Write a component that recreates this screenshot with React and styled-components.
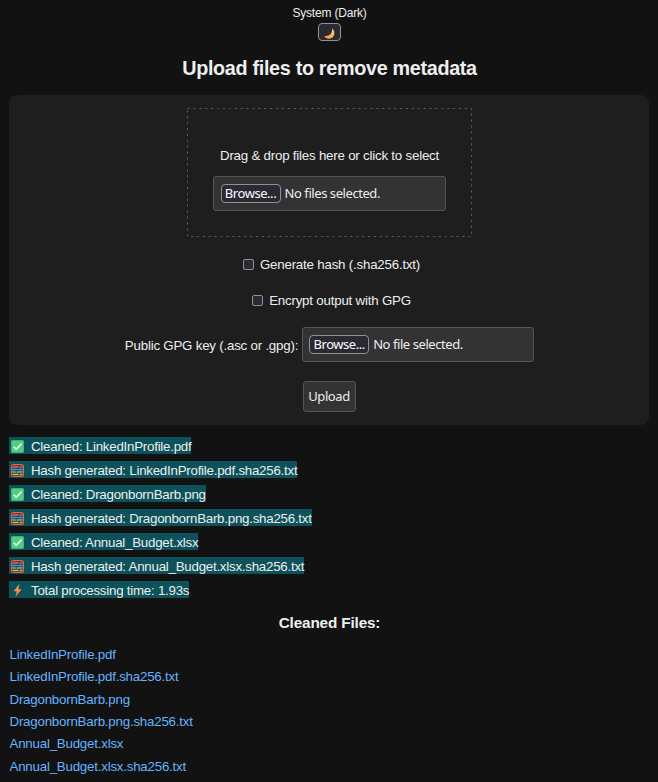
import React from "react";
import styled, { createGlobalStyle } from "styled-components";

const GlobalStyle = createGlobalStyle`
  * { box-sizing: border-box; }
  body {
    margin: 0;
    background: #121212;
    color: #eee;
    font: 13.3px/16px "Liberation Sans", Arial, sans-serif;
    letter-spacing: -0.21px;
  }
`;

const Page = styled.main`
  height: 782px;
  padding: 5px 9px 0;
  overflow: hidden;
  background: #121212;
`;

const ThemeBar = styled.div`
  display: flex;
  flex-direction: column;
  align-items: center;
  font-size: 12px;
  letter-spacing: -0.2px;
`;

const ThemeLabel = styled.span`
  padding-left: 1px;
`;

const ThemeButton = styled.button`
  display: flex;
  align-items: center;
  justify-content: center;
  width: 23px;
  height: 18px;
  margin: 2px 0 0;
  padding: 2px 0 0 1px;
  background: #2b2a33;
  border: 1px solid #8f8f9d;
  border-radius: 4px;
`;

const Title = styled.h2`
  margin: 16px 0 0;
  padding-left: 1px;
  font-size: 19.8px;
  line-height: 22px;
  letter-spacing: -0.32px;
  text-align: center;
`;

const Form = styled.form`
  display: flex;
  flex-direction: column;
  align-items: center;
  height: 330px;
  margin-top: 16px;
  padding-top: 13px;
  background: #1e1e1e;
  border-radius: 8px;
`;

const DropZone = styled.div`
  position: relative;
  display: flex;
  flex-direction: column;
  align-items: center;
  width: 285px;
  height: 129px;
  padding-top: 40px;
`;

const DropText = styled.span`
  padding-left: 1px;
`;

const DashedBorder = styled.svg`
  position: absolute;
  inset: 0;
  width: 285px;
  height: 129px;
`;

const FileField = styled.div`
  display: flex;
  align-items: center;
  width: ${(p) => p.$width}px;
  height: 35px;
  margin-top: ${(p) => p.$top || 0}px;
  padding-left: ${(p) => p.$inset}px;
  background: #333;
  border: 1px solid #555;
  border-radius: 3px;
  font: 13px/17px "Noto Sans", sans-serif;
`;

const Browse = styled.button`
  width: 60px;
  height: 19px;
  margin: 0 4px 0 0;
  padding: 0;
  background: #2b2a33;
  color: #fbfbfe;
  border: 1px solid #8f8f9d;
  border-radius: 4px;
  font: 13px/17px "Noto Sans", sans-serif;
  white-space: nowrap;
`;

const BrowseText = styled.span`
  display: block;
  height: 17px;
  letter-spacing: -0.45px;
`;

const Fit = styled.span`
  letter-spacing: -0.43px;
  white-space: nowrap;
`;

const CheckRow = styled.label`
  display: flex;
  align-items: center;
  margin-top: 20px;
  padding-left: 5px;
  letter-spacing: -0.2px;
`;

const Checkbox = styled.input`
  appearance: none;
  width: 11px;
  height: 11px;
  margin: 0 6px 2px 0;
  background: #2b2a33;
  border: 1px solid #8f8f9d;
  border-radius: 2px;
`;

const KeyRow = styled.div`
  display: flex;
  align-items: center;
  gap: 4px;
  margin-top: 18px;
  padding-left: 1px;
`;

const KeyLabel = styled.span`
  padding-top: 2px;
`;

const UploadButton = styled.button`
  width: 53px;
  height: 31px;
  margin: 19px 0 0;
  padding: 0;
  background: #333;
  color: #eee;
  border: 1px solid #555;
  border-radius: 3px;
  font: 13px/17px "Noto Sans", sans-serif;
`;

const Log = styled.div`
  display: flex;
  flex-direction: column;
  align-items: flex-start;
  gap: 7px;
  margin-top: 12px;
`;

const LogLine = styled.div`
  display: flex;
  align-items: center;
  height: 17px;
  padding-left: 2px;
  background: #0d525a;
  color: #eee;
  line-height: 17px;
  letter-spacing: -0.235px;
  white-space: nowrap;

  svg { margin: 1px 7px 0 0; }
`;

const LogText = styled.span`
  padding-top: 2px;
`;

const FilesTitle = styled.h3`
  margin: 16px 0 0;
  padding-left: 1px;
  font-size: 15.3px;
  line-height: 18px;
  letter-spacing: -0.15px;
  text-align: center;
`;

const FileList = styled.div`
  display: flex;
  flex-direction: column;
  align-items: flex-start;
  margin-top: 12px;
  padding-left: 0.5px;
  line-height: 22.35px;
`;

const FileLink = styled.a`
  color: #66b3ff;
  text-decoration: none;
`;

const MoonIcon = () => (
  <svg width="11" height="11" viewBox="0 0 11 11">
    <defs>
      <linearGradient id="moon" x1="0" y1="1" x2="1" y2="0">
        <stop offset="0" stopColor="#f29443" />
        <stop offset="1" stopColor="#ffd66c" />
      </linearGradient>
    </defs>
    <path d="M8.1.3C12.2 4 10.4 10.6 5 10.7 2.8 10.8 1.2 9.7.2 7.9 5 9 8.9 5.4 8.1.3Z" fill="url(#moon)" />
  </svg>
);

const CheckIcon = () => (
  <svg width="13" height="13" viewBox="0 0 13 13">
    <rect x=".2" y=".2" width="12.6" height="12.6" rx="1" fill="#4fce7d" />
    <path d="M2.7 6.7 5.2 9.2 10.5 3.8" fill="none" stroke="#fff" strokeWidth="1.5" />
  </svg>
);

const AbacusIcon = () => (
  <svg width="13" height="13" viewBox="0 0 13 13">
    <rect x=".6" y=".6" width="11.8" height="11.8" rx="2" fill="#343c46" stroke="#df6544" strokeWidth="1.2" />
    <path d="M1.5 3h10M1.5 5.5h10M1.5 8h10M1.5 10.5h10" stroke="#a49aa0" strokeWidth=".6" />
    <path d="M2 3h5M9.5 3h2" stroke="#e44d73" strokeWidth="1.4" />
    <path d="M1.5 5.5h4M7 5.5h4.5" stroke="#3e9bea" strokeWidth="1.4" />
    <path d="M1.5 8h3M6 8h5.5" stroke="#45c779" strokeWidth="1.4" />
    <path d="M2 10.4h5M9 10.4h2" stroke="#f1b34d" strokeWidth="1.2" />
  </svg>
);

const BoltIcon = () => (
  <svg width="13" height="13" viewBox="0 0 13 13">
    <defs>
      <linearGradient id="bolt" x1="0" y1="0" x2="0" y2="1">
        <stop stopColor="#ffb34e" />
        <stop offset="1" stopColor="#f36a3d" />
      </linearGradient>
    </defs>
    <path d="M8.4 0 2.7 7.2h3L4.5 13 10.6 5.3H7.3Z" fill="url(#bolt)" />
  </svg>
);

const icons = { check: CheckIcon, abacus: AbacusIcon, bolt: BoltIcon };

const logLines = [
  ["check", "Cleaned: LinkedInProfile.pdf"],
  ["abacus", "Hash generated: LinkedInProfile.pdf.sha256.txt"],
  ["check", "Cleaned: DragonbornBarb.png"],
  ["abacus", "Hash generated: DragonbornBarb.png.sha256.txt"],
  ["check", "Cleaned: Annual_Budget.xlsx"],
  ["abacus", "Hash generated: Annual_Budget.xlsx.sha256.txt"],
  ["bolt", "Total processing time: 1.93s"],
];

const files = [
  "LinkedInProfile.pdf",
  "LinkedInProfile.pdf.sha256.txt",
  "DragonbornBarb.png",
  "DragonbornBarb.png.sha256.txt",
  "Annual_Budget.xlsx",
  "Annual_Budget.xlsx.sha256.txt",
];

export default function App() {
  return (
    <>
      <GlobalStyle />
      <Page>
        <ThemeBar>
          <ThemeLabel>System (Dark)</ThemeLabel>
          <ThemeButton type="button" aria-label="Switch theme"><MoonIcon /></ThemeButton>
        </ThemeBar>
        <Title>Upload files to remove metadata</Title>
        <Form>
          <DropZone>
            <DashedBorder>
              <rect x=".5" y=".5" width="284" height="128" fill="none" stroke="#5a5a5a" strokeDasharray="2.2 3.7" />
            </DashedBorder>
            <DropText>Drag &amp; drop files here or click to select</DropText>
            <FileField $width={233} $top={12} $inset={7}>
              <Browse type="button"><BrowseText>Browse...</BrowseText></Browse>
              <Fit>No files selected.</Fit>
            </FileField>
          </DropZone>
          <CheckRow><Checkbox type="checkbox" />Generate hash (.sha256.txt)</CheckRow>
          <CheckRow><Checkbox type="checkbox" />Encrypt output with GPG</CheckRow>
          <KeyRow>
            <KeyLabel>Public GPG key (.asc or .gpg):</KeyLabel>
            <FileField $width={232} $inset={6}>
              <Browse type="button"><BrowseText>Browse...</BrowseText></Browse>
              <Fit>No file selected.</Fit>
            </FileField>
          </KeyRow>
          <UploadButton type="button"><Fit>Upload</Fit></UploadButton>
        </Form>
        <Log>
          {logLines.map(([kind, text]) => {
            const Icon = icons[kind];
            return <LogLine key={text}><Icon /><LogText>{text}</LogText></LogLine>;
          })}
        </Log>
        <FilesTitle>Cleaned Files:</FilesTitle>
        <FileList>
          {files.map((name) => <FileLink key={name} href="#">{name}</FileLink>)}
        </FileList>
      </Page>
    </>
  );
}
